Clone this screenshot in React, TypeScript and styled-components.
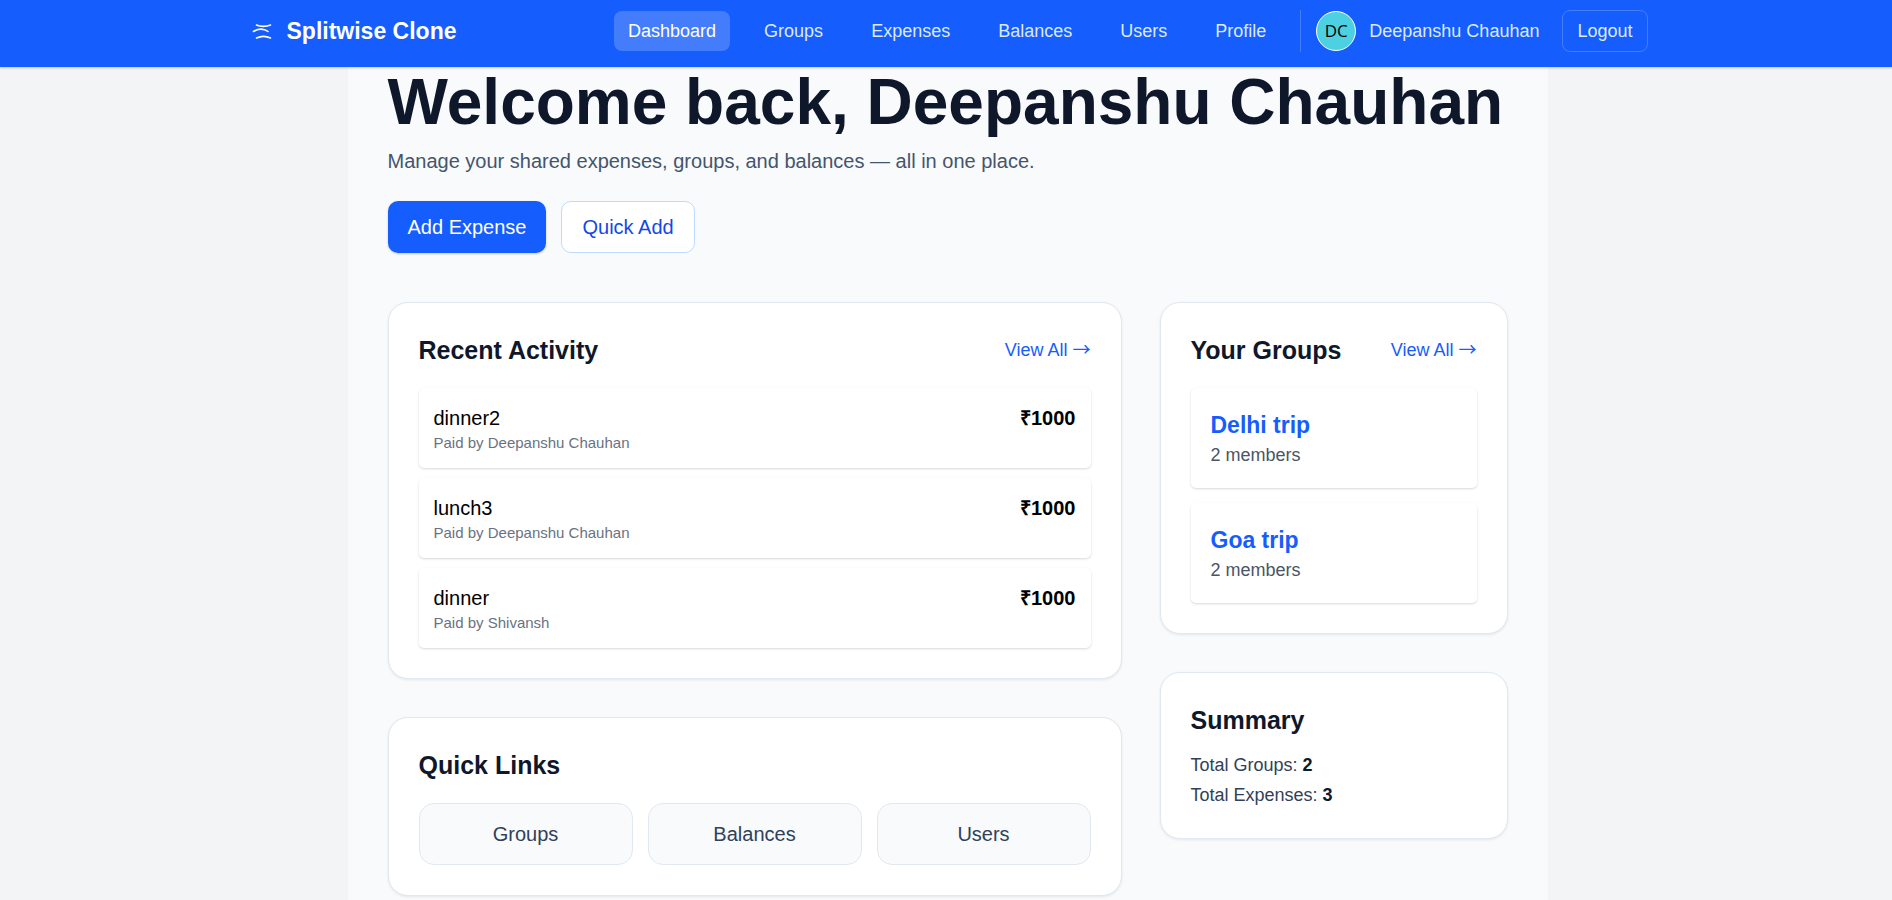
import React from "react";
import styled, { createGlobalStyle } from "styled-components";

const GlobalStyle = createGlobalStyle`
  *, *::before, *::after { box-sizing: border-box; }
  body {
    margin: 0;
    background: #f3f4f6;
    color: #000;
    font-family: "Liberation Sans", Arial, sans-serif;
    font-size: 20px;
    line-height: 30px;
  }
  h1, h2, h3, p, ul { margin: 0; padding: 0; }
  ul { list-style: none; }
  a { color: inherit; text-decoration: none; }
  button { font: inherit; cursor: pointer; }
`;

const Page = styled.div`
  min-height: 100vh;
  display: flex;
  flex-direction: column;
`;

const Header = styled.header`
  position: sticky;
  top: 0;
  z-index: 10;
  padding-left: 3px;
  background: #155dfc;
  color: #fff;
  box-shadow: 0 1px 3px rgba(0, 0, 0, 0.1), 0 1px 2px rgba(0, 0, 0, 0.1);
`;

const HeaderInner = styled.div`
  max-width: 1400px;
  min-height: 67px;
  margin: 0 auto;
  padding: 10px 0 15px;
  display: flex;
  align-items: center;
  justify-content: space-between;
`;

const Brand = styled.a`
  display: flex;
  align-items: center;
  gap: 14px;
  font-size: 23px;
  font-weight: 700;
`;

const BrandIcon = styled.svg`
  width: 25px;
  height: 25px;
`;

const NavArea = styled.div`
  display: flex;
  align-items: center;
`;

const Nav = styled.nav`
  display: flex;
  gap: 20px;
`;

const NavLink = styled.a<{ $active?: boolean }>`
  padding: 5px 14px;
  border-radius: 8px;
  font-size: 18px;
  color: ${(p) => (p.$active ? "#fff" : "#dbeafe")};
  background: ${(p) => (p.$active ? "rgba(255, 255, 255, 0.2)" : "transparent")};
`;

const Account = styled.div`
  display: flex;
  align-items: center;
  gap: 13px;
  margin-left: 20px;
  padding-left: 15px;
  border-left: 1px solid #447dfd;
  font-size: 18px;
  color: #dbeafe;
`;

const Avatar = styled.span`
  width: 40px;
  height: 40px;
  display: grid;
  place-items: center;
  border: 1px solid #fff;
  border-radius: 50%;
  background: #4dd0e1;
  color: #000;
  font-family: "Open Sans", sans-serif;
  font-size: 17px;
`;

const LogoutButton = styled.button`
  height: 42px;
  margin-left: 10px;
  padding: 0 14px;
  border: 1px solid #447dfd;
  border-radius: 8px;
  background: transparent;
  color: #dbeafe;
`;

const Shell = styled.div`
  flex: 1;
  display: flex;
  justify-content: center;
  padding-left: 3px;
`;

const Main = styled.main`
  width: 100%;
  max-width: 1200px;
  padding: 0 40px;
  background: #f8fafc;
`;

const Title = styled.h1`
  font-size: 64px;
  line-height: 70px;
  color: #0f172b;
`;

const Subtitle = styled.p`
  margin-top: 9px;
  color: #45556c;
`;

const Actions = styled.div`
  display: flex;
  gap: 15px;
  margin: 25px 0 49px;
`;

const ActionButton = styled.button<{ $primary?: boolean }>`
  height: 52px;
  padding: 0 20px;
  border: ${(p) => (p.$primary ? "0" : "1px solid #bedbff")};
  border-radius: 10px;
  background: ${(p) => (p.$primary ? "#155dfc" : "#fff")};
  color: ${(p) => (p.$primary ? "#fff" : "#1447e6")};
  box-shadow: ${(p) =>
    p.$primary ? "0 1px 3px rgba(0, 0, 0, 0.1), 0 1px 2px rgba(0, 0, 0, 0.1)" : "none"};
`;

const Columns = styled.div`
  display: grid;
  grid-template-columns: repeat(3, 1fr);
  gap: 38px;
  align-items: start;
`;

const Column = styled.div<{ $span?: number }>`
  grid-column: span ${(p) => p.$span ?? 1};
  display: grid;
  gap: 38px;
`;

const Card = styled.section`
  padding: 30px;
  border: 1px solid #e2e8f0;
  border-radius: 20px;
  background: #fff;
  box-shadow: 0 1px 3px rgba(0, 0, 0, 0.08);
`;

const CardHeader = styled.div<{ $tight?: boolean }>`
  display: flex;
  align-items: center;
  justify-content: space-between;
  margin-bottom: ${(p) => (p.$tight ? "15px" : "20px")};
`;

const CardTitle = styled.h2`
  font-size: 25px;
  line-height: 35px;
  color: #0f172b;
`;

const ViewAll = styled.a`
  font-size: 18px;
  line-height: 25px;
  color: #155dfc;
`;

const Arrow = styled.span`
  font-family: "Noto Sans CJK JP", sans-serif;
  line-height: 1;
`;

const ItemList = styled.ul<{ $gap: number }>`
  display: grid;
  gap: ${(p) => p.$gap}px;
`;

const Item = styled.li`
  display: flex;
  justify-content: space-between;
  padding: 15px;
  border-radius: 5px;
  box-shadow: 0 1px 3px rgba(0, 0, 0, 0.1), 0 1px 2px rgba(0, 0, 0, 0.06);
`;

const GroupItem = styled(Item)`
  flex-direction: column;
  padding: 20px;
`;

const PaidBy = styled.p`
  font-size: 15px;
  line-height: 20px;
  color: #6a7282;
`;

const Amount = styled.strong`
  font-weight: 700;
`;

const GroupName = styled.a`
  font-size: 23px;
  line-height: 35px;
  font-weight: 700;
  color: #155dfc;
`;

const Members = styled.p`
  font-size: 18px;
  line-height: 25px;
  color: #4a5565;
`;

const LinkGrid = styled.div`
  display: grid;
  grid-template-columns: repeat(3, 1fr);
  gap: 15px;
`;

const QuickLink = styled.a`
  padding: 15px;
  border: 1px solid #e2e8f0;
  border-radius: 15px;
  background: #f8fafc;
  color: #314158;
  text-align: center;
`;

const SummaryList = styled.div`
  display: grid;
  gap: 5px;
  font-size: 18px;
  line-height: 25px;
  color: #314158;

  strong { color: #0f172b; }
`;

const navItems = ["Dashboard", "Groups", "Expenses", "Balances", "Users", "Profile"];

const activity = [
  { name: "dinner2", payer: "Deepanshu Chauhan", amount: 1000 },
  { name: "lunch3", payer: "Deepanshu Chauhan", amount: 1000 },
  { name: "dinner", payer: "Shivansh", amount: 1000 },
];

const groups = [
  { name: "Delhi trip", members: 2 },
  { name: "Goa trip", members: 2 },
];

export default function App() {
  return (
    <Page>
      <GlobalStyle />
      <Header>
        <HeaderInner>
          <Brand href="#">
            <BrandIcon viewBox="0 0 25 25" fill="none" stroke="#fff" strokeWidth="1.6" strokeLinecap="round" aria-hidden="true">
              <path d="M8.500 6c3.500 1.800 10 1.800 14 0" />
              <path d="M5.500 12.500c4.500-3.200 10.500-3.200 14.500 0" />
              <path d="M8.500 19c4-1.800 10-1.800 14 0" />
            </BrandIcon>
            Splitwise Clone
          </Brand>
          <NavArea>
            <Nav>
              {navItems.map((label, i) => (
                <NavLink key={label} href="#" $active={i === 0}>{label}</NavLink>
              ))}
            </Nav>
            <Account>
              <Avatar>DC</Avatar>
              <span>Deepanshu Chauhan</span>
              <LogoutButton type="button">Logout</LogoutButton>
            </Account>
          </NavArea>
        </HeaderInner>
      </Header>
      <Shell>
        <Main>
          <Title>Welcome back, Deepanshu Chauhan</Title>
          <Subtitle>Manage your shared expenses, groups, and balances — all in one place.</Subtitle>
          <Actions>
            <ActionButton type="button" $primary>Add Expense</ActionButton>
            <ActionButton type="button">Quick Add</ActionButton>
          </Actions>
          <Columns>
            <Column $span={2}>
              <Card>
                <CardHeader>
                  <CardTitle>Recent Activity</CardTitle>
                  <ViewAll href="#">View All <Arrow>→</Arrow></ViewAll>
                </CardHeader>
                <ItemList $gap={10}>
                  {activity.map((a) => (
                    <Item key={a.name}>
                      <div>
                        <p>{a.name}</p>
                        <PaidBy>Paid by {a.payer}</PaidBy>
                      </div>
                      <Amount>₹{a.amount}</Amount>
                    </Item>
                  ))}
                </ItemList>
              </Card>
              <Card>
                <CardHeader>
                  <CardTitle>Quick Links</CardTitle>
                </CardHeader>
                <LinkGrid>
                  <QuickLink href="#">Groups</QuickLink>
                  <QuickLink href="#">Balances</QuickLink>
                  <QuickLink href="#">Users</QuickLink>
                </LinkGrid>
              </Card>
            </Column>
            <Column>
              <Card>
                <CardHeader>
                  <CardTitle>Your Groups</CardTitle>
                  <ViewAll href="#">View All <Arrow>→</Arrow></ViewAll>
                </CardHeader>
                <ItemList $gap={15}>
                  {groups.map((g) => (
                    <GroupItem key={g.name}>
                      <GroupName href="#">{g.name}</GroupName>
                      <Members>{g.members} members</Members>
                    </GroupItem>
                  ))}
                </ItemList>
              </Card>
              <Card>
                <CardHeader $tight>
                  <CardTitle>Summary</CardTitle>
                </CardHeader>
                <SummaryList>
                  <p>Total Groups: <strong>2</strong></p>
                  <p>Total Expenses: <strong>3</strong></p>
                </SummaryList>
              </Card>
            </Column>
          </Columns>
        </Main>
      </Shell>
    </Page>
  );
}
